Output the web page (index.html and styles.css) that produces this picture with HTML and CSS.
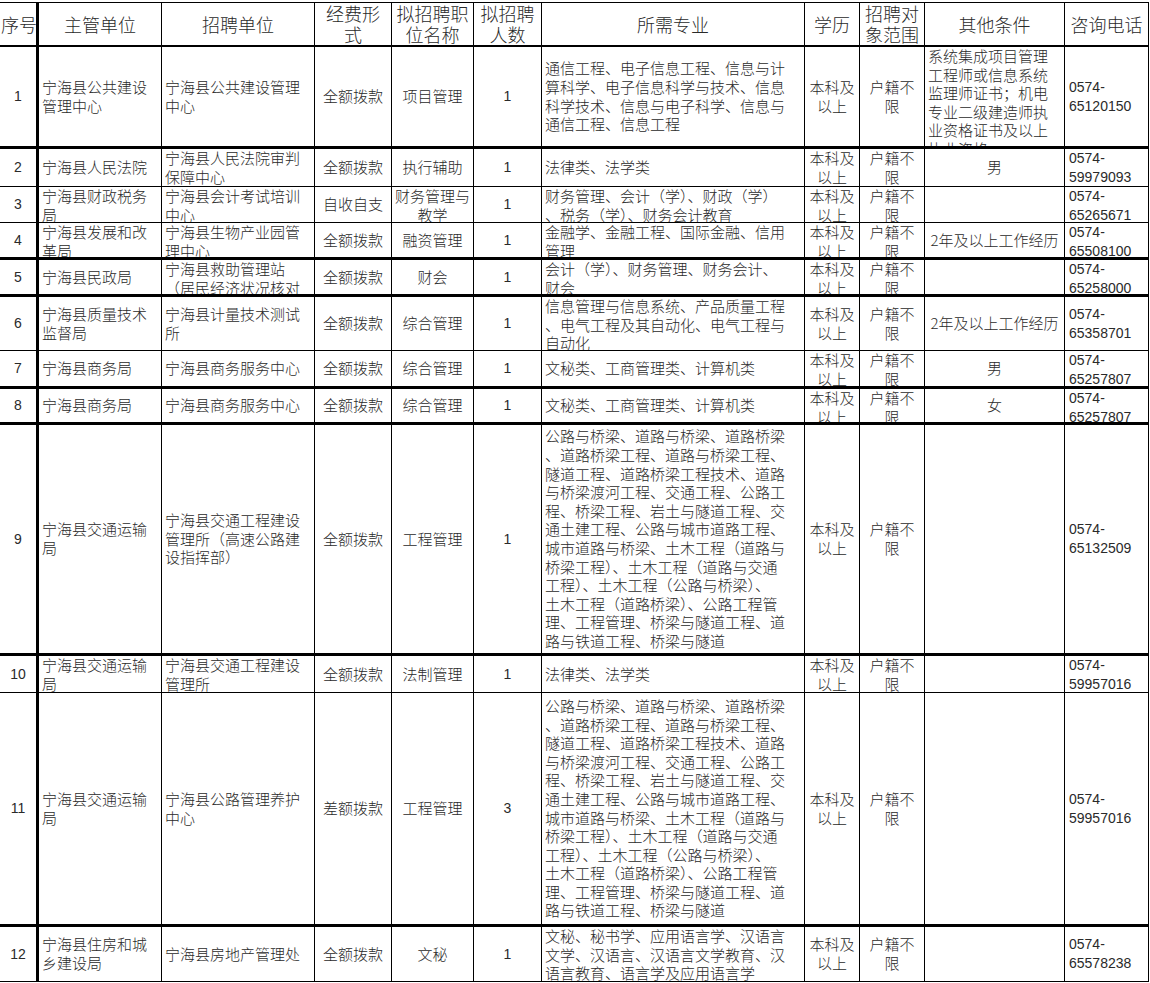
FILE: index.html
```html
<!DOCTYPE html>
<html lang="zh-CN">
<head>
<meta charset="utf-8">
<title>宁海县事业单位招聘计划</title>
<link rel="stylesheet" href="styles.css">
</head>
<body>
<div class="sheet">
  <div class="row head">
    <div class="c">序号</div>
    <div class="c">主管单位</div>
    <div class="c">招聘单位</div>
    <div class="c">经费形<br>式</div>
    <div class="c">拟招聘职<br>位名称</div>
    <div class="c">拟招聘<br>人数</div>
    <div class="c">所需专业</div>
    <div class="c">学历</div>
    <div class="c">招聘对<br>象范围</div>
    <div class="c">其他条件</div>
    <div class="c">咨询电话</div>
  </div>

  <div class="row thick">
    <div class="c num">1</div>
    <div class="c">宁海县公共建设<br>管理中心</div>
    <div class="c">宁海县公共建设管理<br>中心</div>
    <div class="c ctr">全额拨款</div>
    <div class="c ctr">项目管理</div>
    <div class="c ctr num">1</div>
    <div class="c">通信工程、电子信息工程、信息与计<br>算科学、电子信息科学与技术、信息<br>科学技术、信息与电子科学、信息与<br>通信工程、信息工程</div>
    <div class="c ctr">本科及<br>以上</div>
    <div class="c ctr">户籍不<br>限</div>
    <div class="c">系统集成项目管理<br>工程师或信息系统<br>监理师证书；机电<br>专业二级建造师执<br>业资格证书及以上<br>执业资格</div>
    <div class="c tel">0574-<br>65120150</div>
  </div>

  <div class="row">
    <div class="c num">2</div>
    <div class="c">宁海县人民法院</div>
    <div class="c">宁海县人民法院审判<br>保障中心</div>
    <div class="c ctr">全额拨款</div>
    <div class="c ctr">执行辅助</div>
    <div class="c ctr num">1</div>
    <div class="c">法律类、法学类</div>
    <div class="c ctr">本科及<br>以上</div>
    <div class="c ctr">户籍不<br>限</div>
    <div class="c ctr">男</div>
    <div class="c tel">0574-<br>59979093</div>
  </div>

  <div class="row">
    <div class="c num">3</div>
    <div class="c">宁海县财政税务<br>局</div>
    <div class="c">宁海县会计考试培训<br>中心</div>
    <div class="c ctr">自收自支</div>
    <div class="c ctr">财务管理与<br>教学</div>
    <div class="c ctr num">1</div>
    <div class="c">财务管理、会计（学）、财政（学）<br>、税务（学）、财务会计教育</div>
    <div class="c ctr">本科及<br>以上</div>
    <div class="c ctr">户籍不<br>限</div>
    <div class="c ctr"></div>
    <div class="c tel">0574-<br>65265671</div>
  </div>

  <div class="row thick">
    <div class="c num">4</div>
    <div class="c">宁海县发展和改<br>革局</div>
    <div class="c">宁海县生物产业园管<br>理中心</div>
    <div class="c ctr">全额拨款</div>
    <div class="c ctr">融资管理</div>
    <div class="c ctr num">1</div>
    <div class="c">金融学、金融工程、国际金融、信用<br>管理</div>
    <div class="c ctr">本科及<br>以上</div>
    <div class="c ctr">户籍不<br>限</div>
    <div class="c ctr">2年及以上工作经历</div>
    <div class="c tel">0574-<br>65508100</div>
  </div>

  <div class="row thick">
    <div class="c num">5</div>
    <div class="c">宁海县民政局</div>
    <div class="c">宁海县救助管理站<br>（居民经济状况核对<br>中心）</div>
    <div class="c ctr">全额拨款</div>
    <div class="c ctr">财会</div>
    <div class="c ctr num">1</div>
    <div class="c">会计（学）、财务管理、财务会计、<br>财会</div>
    <div class="c ctr">本科及<br>以上</div>
    <div class="c ctr">户籍不<br>限</div>
    <div class="c ctr"></div>
    <div class="c tel">0574-<br>65258000</div>
  </div>

  <div class="row">
    <div class="c num">6</div>
    <div class="c">宁海县质量技术<br>监督局</div>
    <div class="c">宁海县计量技术测试<br>所</div>
    <div class="c ctr">全额拨款</div>
    <div class="c ctr">综合管理</div>
    <div class="c ctr num">1</div>
    <div class="c">信息管理与信息系统、产品质量工程<br>、电气工程及其自动化、电气工程与<br>自动化</div>
    <div class="c ctr">本科及<br>以上</div>
    <div class="c ctr">户籍不<br>限</div>
    <div class="c ctr">2年及以上工作经历</div>
    <div class="c tel">0574-<br>65358701</div>
  </div>

  <div class="row thick">
    <div class="c num">7</div>
    <div class="c">宁海县商务局</div>
    <div class="c">宁海县商务服务中心</div>
    <div class="c ctr">全额拨款</div>
    <div class="c ctr">综合管理</div>
    <div class="c ctr num">1</div>
    <div class="c">文秘类、工商管理类、计算机类</div>
    <div class="c ctr">本科及<br>以上</div>
    <div class="c ctr">户籍不<br>限</div>
    <div class="c ctr">男</div>
    <div class="c tel">0574-<br>65257807</div>
  </div>

  <div class="row thick">
    <div class="c num">8</div>
    <div class="c">宁海县商务局</div>
    <div class="c">宁海县商务服务中心</div>
    <div class="c ctr">全额拨款</div>
    <div class="c ctr">综合管理</div>
    <div class="c ctr num">1</div>
    <div class="c">文秘类、工商管理类、计算机类</div>
    <div class="c ctr">本科及<br>以上</div>
    <div class="c ctr">户籍不<br>限</div>
    <div class="c ctr">女</div>
    <div class="c tel">0574-<br>65257807</div>
  </div>

  <div class="row thick">
    <div class="c num">9</div>
    <div class="c">宁海县交通运输<br>局</div>
    <div class="c">宁海县交通工程建设<br>管理所（高速公路建<br>设指挥部）</div>
    <div class="c ctr">全额拨款</div>
    <div class="c ctr">工程管理</div>
    <div class="c ctr num">1</div>
    <div class="c">公路与桥梁、道路与桥梁、道路桥梁<br>、道路桥梁工程、道路与桥梁工程、<br>隧道工程、道路桥梁工程技术、道路<br>与桥梁渡河工程、交通工程、公路工<br>程、桥梁工程、岩土与隧道工程、交<br>通土建工程、公路与城市道路工程、<br>城市道路与桥梁、土木工程（道路与<br>桥梁工程）、土木工程（道路与交通<br>工程）、土木工程（公路与桥梁）、<br>土木工程（道路桥梁）、公路工程管<br>理、工程管理、桥梁与隧道工程、道<br>路与铁道工程、桥梁与隧道</div>
    <div class="c ctr">本科及<br>以上</div>
    <div class="c ctr">户籍不<br>限</div>
    <div class="c ctr"></div>
    <div class="c tel">0574-<br>65132509</div>
  </div>

  <div class="row">
    <div class="c num">10</div>
    <div class="c">宁海县交通运输<br>局</div>
    <div class="c">宁海县交通工程建设<br>管理所</div>
    <div class="c ctr">全额拨款</div>
    <div class="c ctr">法制管理</div>
    <div class="c ctr num">1</div>
    <div class="c">法律类、法学类</div>
    <div class="c ctr">本科及<br>以上</div>
    <div class="c ctr">户籍不<br>限</div>
    <div class="c ctr"></div>
    <div class="c tel">0574-<br>59957016</div>
  </div>

  <div class="row thick">
    <div class="c num">11</div>
    <div class="c">宁海县交通运输<br>局</div>
    <div class="c">宁海县公路管理养护<br>中心</div>
    <div class="c ctr">差额拨款</div>
    <div class="c ctr">工程管理</div>
    <div class="c ctr num">3</div>
    <div class="c">公路与桥梁、道路与桥梁、道路桥梁<br>、道路桥梁工程、道路与桥梁工程、<br>隧道工程、道路桥梁工程技术、道路<br>与桥梁渡河工程、交通工程、公路工<br>程、桥梁工程、岩土与隧道工程、交<br>通土建工程、公路与城市道路工程、<br>城市道路与桥梁、土木工程（道路与<br>桥梁工程）、土木工程（道路与交通<br>工程）、土木工程（公路与桥梁）、<br>土木工程（道路桥梁）、公路工程管<br>理、工程管理、桥梁与隧道工程、道<br>路与铁道工程、桥梁与隧道</div>
    <div class="c ctr">本科及<br>以上</div>
    <div class="c ctr">户籍不<br>限</div>
    <div class="c ctr"></div>
    <div class="c tel">0574-<br>59957016</div>
  </div>

  <div class="row">
    <div class="c num">12</div>
    <div class="c">宁海县住房和城<br>乡建设局</div>
    <div class="c">宁海县房地产管理处</div>
    <div class="c ctr">全额拨款</div>
    <div class="c ctr">文秘</div>
    <div class="c ctr num">1</div>
    <div class="c">文秘、秘书学、应用语言学、汉语言<br>文学、汉语言、汉语言文学教育、汉<br>语言教育、语言学及应用语言学</div>
    <div class="c ctr">本科及<br>以上</div>
    <div class="c ctr">户籍不<br>限</div>
    <div class="c ctr"></div>
    <div class="c tel">0574-<br>65578238</div>
  </div>
</div>
</body>
</html>
```

FILE: styles.css
```css
* {
  box-sizing: border-box;
}

html,
body {
  margin: 0;
  padding: 0;
  background: #ffffff;
}

body {
  font-family: "Noto Sans CJK SC", "Noto Sans CJK TC", sans-serif;
  font-weight: 300;
  color: #2a2a2a;
}

.sheet {
  display: grid;
  grid-template-columns: 39px 123px 153px 77px 82px 68px 263px 55px 65px 140px 84px;
  grid-template-rows: 44px 102px 38px 36px 37px 37px 54px 38px 36px 231px 37px 234px 55px;
  width: 1149px;
  margin-top: 2px;
  border-top: 1px solid #000;
}

.row {
  display: contents;
}

.c {
  display: flex;
  flex-direction: column;
  justify-content: center;
  justify-content: safe center;
  overflow: hidden;
  padding: 0 3px;
  border-right: 1px solid #000;
  border-bottom: 1px solid #000;
  font-size: 15px;
  line-height: 18.6px;
  white-space: nowrap;
}

.row > .c:first-child {
  border-right-width: 3px;
  text-align: center;
}

.row.thick > .c {
  border-bottom-width: 3px;
}

.row.head > .c {
  font-size: 18px;
  line-height: 21px;
  text-align: center;
  border-bottom-width: 2px;
  padding: 0 1px;
}

.ctr {
  text-align: center;
}

.num {
  font-family: "Liberation Sans", "Noto Sans CJK SC", sans-serif;
  font-size: 14px;
}

.tel {
  font-family: "Liberation Sans", "Noto Sans CJK SC", sans-serif;
  font-size: 14px;
  padding-left: 4px;
}
```
